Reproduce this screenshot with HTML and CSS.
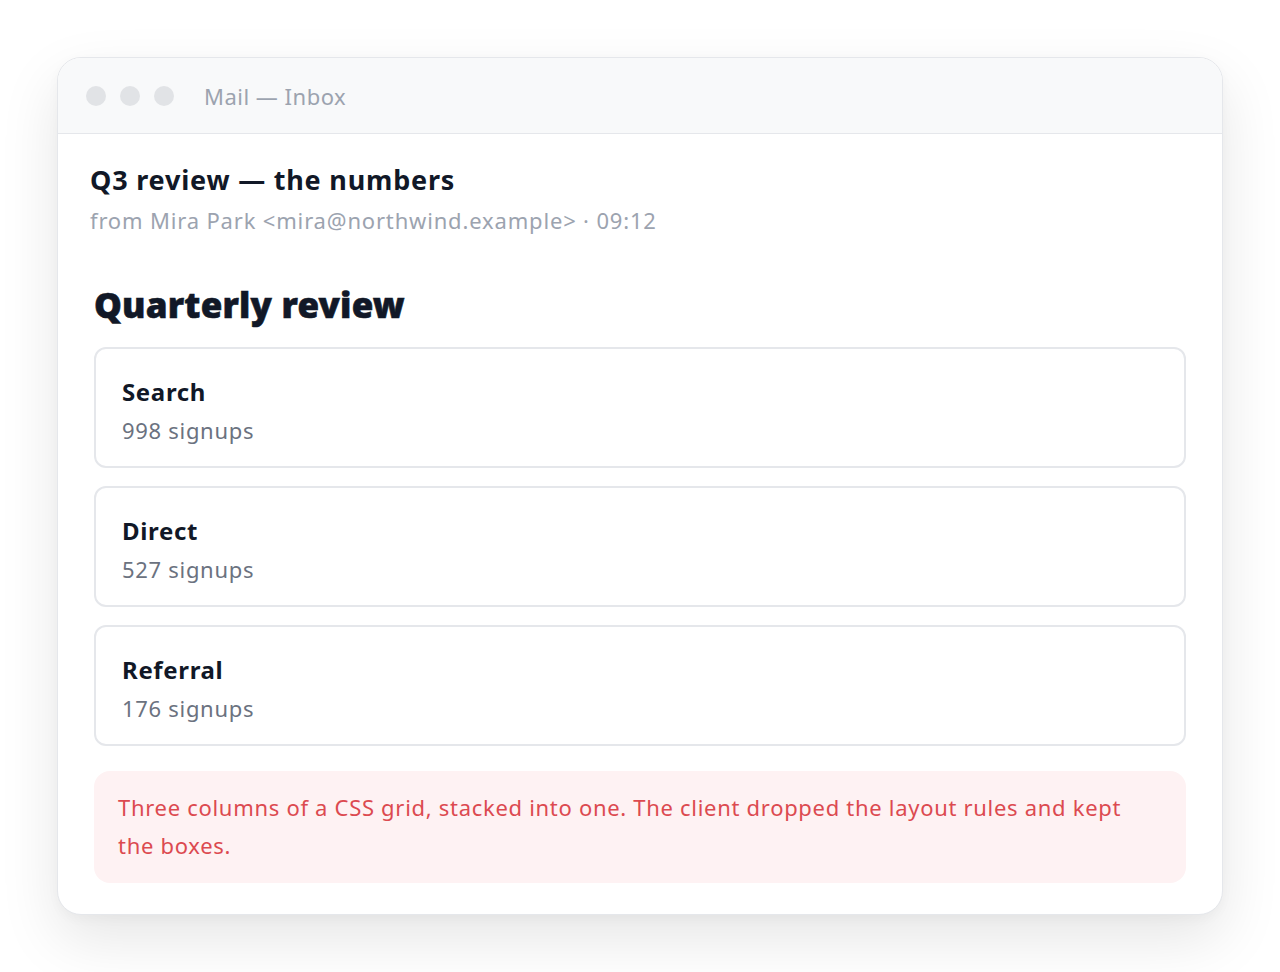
FILE: index.html
```html
<!DOCTYPE html>
<html lang="en">
<head>
    <meta charset="UTF-8">
    <meta name="viewport" content="width=device-width, initial-scale=1.0">
    <title>Mail — Inbox</title>
    <link rel="stylesheet" href="styles.css">
</head>
<body>
    <div class="window">
        <div class="titlebar">
            <span class="dot"></span>
            <span class="dot"></span>
            <span class="dot"></span>
            <span class="title">Mail — Inbox</span>
        </div>
        <div class="mail">
            <div class="subject">Q3 review — the numbers</div>
            <div class="meta">from Mira Park &lt;mira@northwind.example&gt; · 09:12</div>

            <div class="message">
                <h1>Quarterly review</h1>
                <div class="card">
                    <div class="card-name">Search</div>
                    <div class="card-count">998 signups</div>
                </div>
                <div class="card">
                    <div class="card-name">Direct</div>
                    <div class="card-count">527 signups</div>
                </div>
                <div class="card">
                    <div class="card-name">Referral</div>
                    <div class="card-count">176 signups</div>
                </div>
                <div class="note">Three columns of a CSS grid, stacked into one. The client dropped the layout rules and kept the boxes.</div>
            </div>
        </div>
    </div>
</body>
</html>
```

FILE: styles.css
```css
body{
    margin: 0;
    padding: 57px;
    background: #ffffff;
    font-family: "Noto Sans", "Open Sans", sans-serif;
    color: #111827;
}
.window{
    width: 1166px;
    box-sizing: border-box;
    border: 1px solid #e5e7eb;
    border-radius: 24px;
    background: #ffffff;
    box-shadow: 0 24px 60px rgba(0,0,0,0.10), 0 4px 12px rgba(0,0,0,0.03);
    overflow: hidden;
}
.titlebar{
    display: flex;
    align-items: center;
    gap: 14px;
    height: 75px;
    padding: 0 28px;
    background: #f8f9fa;
    border-bottom: 1px solid #e5e7eb;
}
.dot{
    width: 20px;
    height: 20px;
    border-radius: 50%;
    background: #e1e3e6;
}
.title{
    margin-left: 16px;
    font-size: 22px;
    letter-spacing: 0.5px;
    color: #9ca3af;
}
.mail{
    padding: 26px 32px 31px;
}
.subject{
    font-size: 27px;
    font-weight: 700;
    line-height: 40px;
    letter-spacing: 0.8px;
    margin-bottom: 2px;
    color: #111827;
}
.meta{
    font-size: 22px;
    line-height: 36px;
    letter-spacing: 0.83px;
    color: #9ca3af;
}
.message{
    margin: 0 4px;
}
/* heavier than the bold the font ships with */
.message h1{
    margin: 45px 0 20px;
    font-size: 35px;
    font-weight: 900;
    line-height: 44px;
    letter-spacing: 0.2px;
    -webkit-text-stroke: 0.6px #111827;
}
.card{
    border: 2px solid #e5e7eb;
    border-radius: 12px;
    padding: 24px 26px 17px;
    margin-bottom: 18px;
}
.card-name{
    font-size: 24px;
    font-weight: 700;
    line-height: 38px;
    letter-spacing: 0.65px;
}
.card-count{
    font-size: 22px;
    line-height: 38px;
    letter-spacing: 0.7px;
    color: #6b7280;
}
.note{
    margin-top: 25px;
    padding: 17px 24px 19px;
    border-radius: 16px;
    background: #fef2f3;
    color: #dc4a50;
    font-size: 22px;
    line-height: 38px;
    letter-spacing: 0.7px;
}
```
